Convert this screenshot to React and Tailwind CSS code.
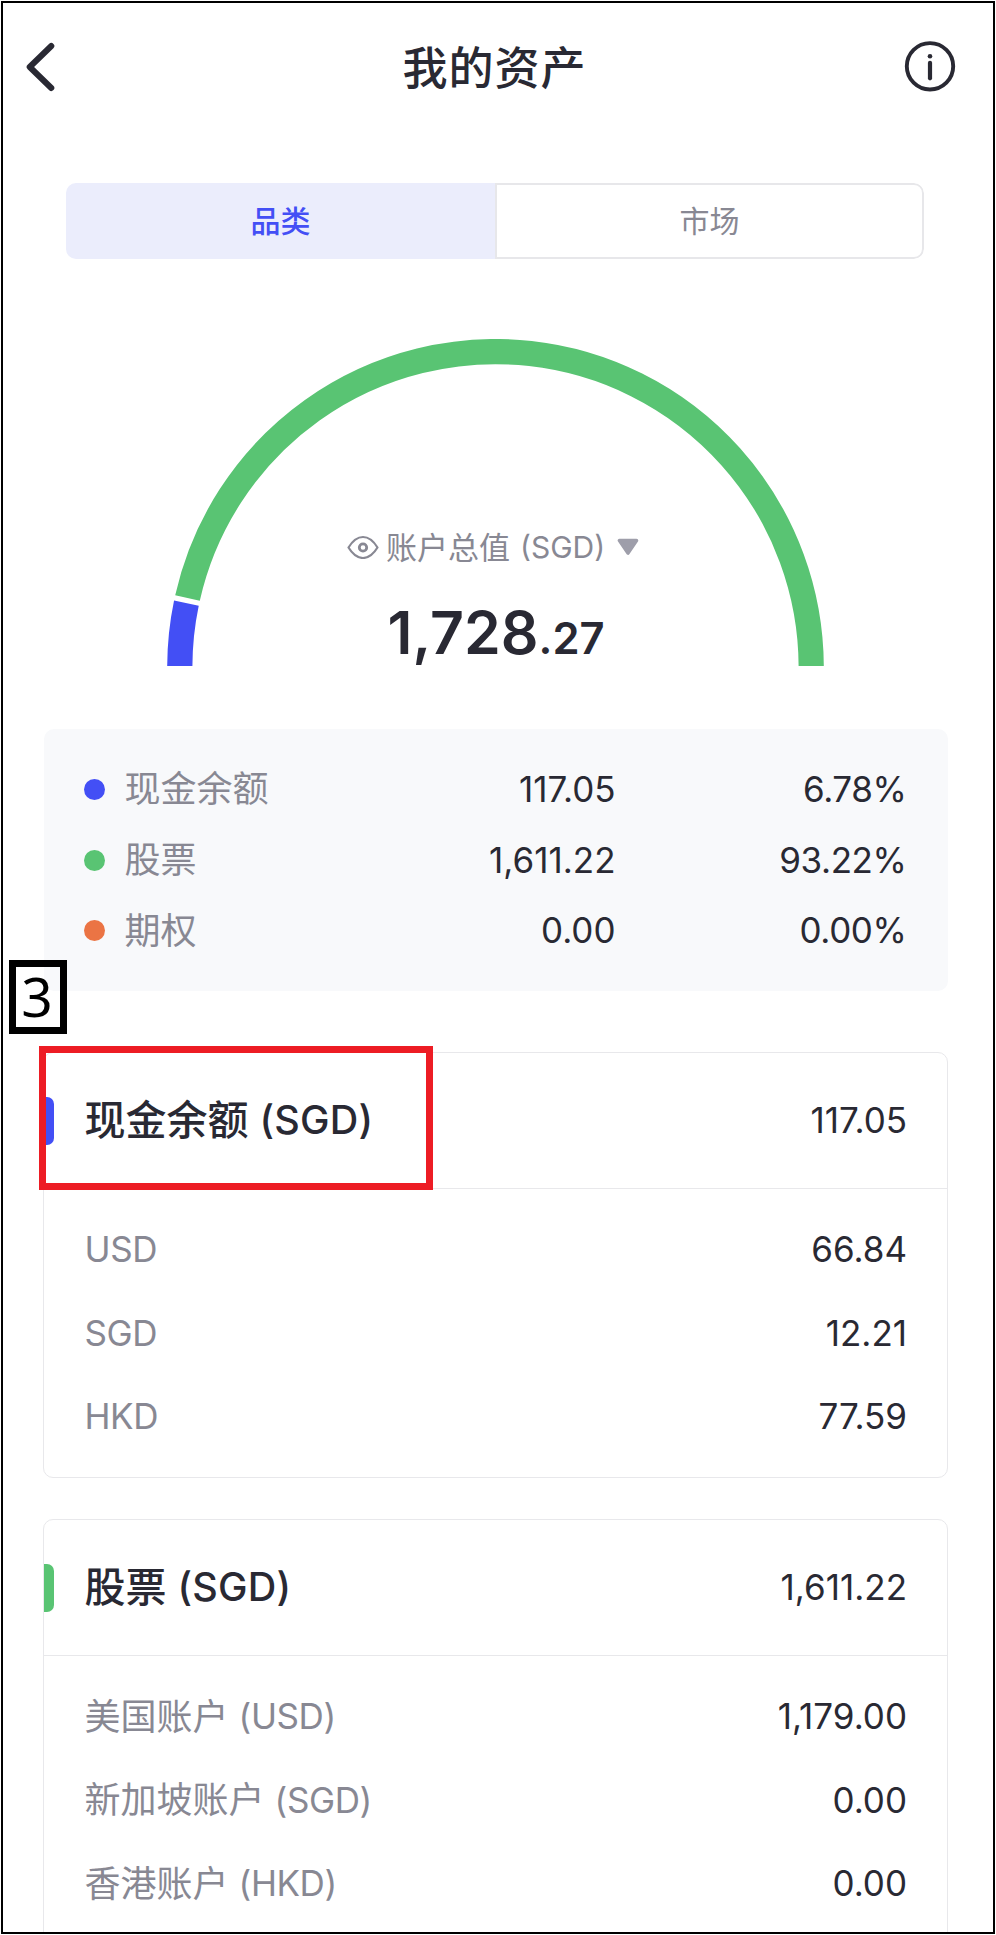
import { useState } from 'react'

const allocation = [
  { name: '现金余额', value: '117.05', percent: '6.78%', dot: 'bg-[#434ff5]' },
  { name: '股票', value: '1,611.22', percent: '93.22%', dot: 'bg-[#59c473]' },
  { name: '期权', value: '0.00', percent: '0.00%', dot: 'bg-[#eb7444]' },
]

const sections = [
  {
    name: '现金余额',
    total: '117.05',
    accent: 'bg-[#434ff5]',
    rows: [
      { code: 'USD', value: '66.84' },
      { code: 'SGD', value: '12.21' },
      { code: 'HKD', value: '77.59' },
    ],
  },
  {
    name: '股票',
    total: '1,611.22',
    accent: 'bg-[#59c473]',
    rows: [
      { name: '美国账户', code: '(USD)', value: '1,179.00' },
      { name: '新加坡账户', code: '(SGD)', value: '0.00' },
      { name: '香港账户', code: '(HKD)', value: '0.00' },
    ],
  },
]

// Point on the gauge, angle in degrees measured from the left end
const point = (angle) => {
  const rad = (angle * Math.PI) / 180
  return `${328.5 - 315.7 * Math.cos(rad)} ${328.3 - 315.7 * Math.sin(rad)}`
}

const arc = (from, to) => `M${point(from)} A315.7 315.7 0 0 1 ${point(to)}`

function Header() {
  return (
    <div className="flex h-32 shrink-0 items-center justify-between pr-[37px] pl-[22px]">
      <svg className="h-[50px] w-[52px]" viewBox="0 0 52 50" fill="none" stroke="#292933" strokeWidth="6" strokeLinecap="round" strokeLinejoin="round">
        <path d="M26.3 4 L4.7 25 L26.3 46" />
      </svg>
      <h1 className="pt-0.5 pl-[8px] text-[45px] leading-none font-medium tracking-[1px] text-[#292933]">我的资产</h1>
      <svg className="h-[52px] w-[52px]" viewBox="0 0 52 52" fill="none" stroke="#292933">
        <circle cx="26" cy="25.3" r="23.2" strokeWidth="3.9" />
        <circle cx="26" cy="15.3" r="2.3" fill="#292933" stroke="none" />
        <path d="M26 21.8 V37.3" strokeWidth="4.2" strokeLinecap="round" />
      </svg>
    </div>
  )
}

function Tabs() {
  const [active, setActive] = useState('品类')

  return (
    <div className="mt-[52px] ml-[63px] flex h-[76px] w-[858px] shrink-0 overflow-hidden rounded-[10px] text-[30px] leading-none">
      {['品类', '市场'].map((tab) => (
        <button
          key={tab}
          onClick={() => setActive(tab)}
          className={`w-1/2 ${
            active === tab
              ? 'bg-[#ebedfc] font-medium text-[#434ff5]'
              : 'rounded-r-[10px] border-2 border-[#e7e7ea] text-[#888893]'
          }`}
        >
          {tab}
        </button>
      ))}
    </div>
  )
}

function Gauge() {
  return (
    <div className="relative mt-[80px] ml-[164px] h-[327px] w-[657px] shrink-0">
      <svg className="h-[327px] w-[657px]" viewBox="0 0 657 327" fill="none" strokeWidth="25.2">
        <path d={arc(0, 11.73)} stroke="#434ff5" />
        <path d={arc(12.68, 180)} stroke="#59c473" />
      </svg>
      <div className="absolute inset-x-0 top-[186px] flex h-11 items-center pl-[180px] text-[#888893]">
        <svg className="h-[24px] w-[32px]" viewBox="0 0 32 24" fill="none" stroke="currentColor" strokeWidth="2.2">
          <path d="M1.5 12.5 C5.5 6 10.5 2 16 2 S26.5 6 30.5 12.5 C26.5 19 21.5 23 16 23 S5.5 19 1.5 12.5 Z" strokeLinejoin="round" />
          <circle cx="16" cy="12.5" r="3.7" strokeWidth="2.8" />
        </svg>
        <span className="ml-[7px] text-[31px] leading-none">账户总值</span>
        <span className="ml-[10px] text-[30px] leading-none">(SGD)</span>
        <svg className="ml-[12px] h-[18px] w-[22px]" viewBox="0 0 22 18">
          <path d="M2.5 2.5 H19.5 L11 15 Z" fill="#9e9eaa" stroke="#9e9eaa" strokeWidth="3.6" strokeLinejoin="round" />
        </svg>
      </div>
      <div className="absolute inset-x-0 top-[264px] flex items-baseline pl-[220.5px] leading-none font-semibold text-[#292933]">
        <span className="text-[59px]">1,728</span>
        <span className="text-[43.5px]">.27</span>
      </div>
    </div>
  )
}

function Allocation() {
  return (
    <div className="mt-[63px] ml-[40.5px] h-[262px] w-[904px] shrink-0 rounded-[10px] bg-[#f8f9fb] pt-[25px]">
      {allocation.map((item) => (
        <div key={item.name} className="flex h-[70.7px] items-center pr-[41px] pl-10 text-[35px] leading-none text-[#292933]">
          <span className={`h-[21px] w-[21px] rounded-full ${item.dot}`}></span>
          <span className="ml-[20px] text-[36px] text-[#888893]">{item.name}</span>
          <span className="ml-auto">{item.value}</span>
          <span className="w-[291px] text-right tracking-[-0.4px]">{item.percent}</span>
        </div>
      ))}
    </div>
  )
}

function Section({ section }) {
  return (
    <div className="ml-[40px] w-[905px] shrink-0 rounded-[10px] border border-[#e8e8eb] text-[35px] leading-none text-[#292933]">
      <div className="flex h-[136px] items-center border-b border-[#e8e8eb] pr-10">
        <span className={`h-12 w-[10px] rounded-r-[7px] ${section.accent}`}></span>
        <span className="ml-[30.5px] text-[41px] font-medium">{section.name}</span>
        <span className="ml-[11px] text-[39.5px] font-medium tracking-[0.2px]">(SGD)</span>
        <span className="ml-auto">{section.total}</span>
      </div>
      <div className="py-[19px]">
        {section.rows.map((row) => (
          <div key={row.code} className="flex h-[83.4px] items-center pr-10 pl-[40.5px]">
            {row.name && <span className="mr-[10px] text-[36px] text-[#888893]">{row.name}</span>}
            <span className="tracking-[-0.4px] text-[#888893]">{row.code}</span>
            <span className="ml-auto">{row.value}</span>
          </div>
        ))}
      </div>
    </div>
  )
}

export default function App() {
  return (
    <div className="h-[1935px] w-[996px] bg-white p-px font-[Inter,'Noto_Sans_CJK_SC',sans-serif]">
      <div className="relative flex h-full flex-col overflow-hidden border-2 border-black bg-white">
        <Header />
        <Tabs />
        <Gauge />
        <Allocation />
        <div className="mt-[61px] flex shrink-0 flex-col gap-[41px]">
          {sections.map((section) => (
            <Section key={section.name} section={section} />
          ))}
        </div>

        {/* Step marker and highlight */}
        <div className="absolute top-[957px] left-[6px] flex h-[74px] w-[58px] items-center justify-center border-[7px] border-black pr-0.5 pb-1 font-['Noto_Sans',sans-serif] text-[55px] leading-none text-black">
          3
        </div>
        <div className="absolute top-[1043px] left-[36px] h-[144px] w-[394px] border-[7px] border-[#ed1c24]"></div>
      </div>
    </div>
  )
}
